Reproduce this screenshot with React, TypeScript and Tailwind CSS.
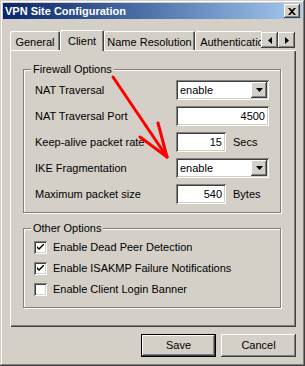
import type { ReactNode } from "react";

// classic 3D bevels
const raised =
  "shadow-[inset_-1px_-1px_0_#404040,inset_1px_1px_0_#ffffff,inset_-2px_-2px_0_#808080,inset_2px_2px_0_#d4d0c8]";
const sunken =
  "shadow-[inset_1px_1px_0_#808080,inset_-1px_-1px_0_#ffffff,inset_2px_2px_0_#404040,inset_-2px_-2px_0_#d4d0c8]";

function Tab({ label, width, selected }: { label: string; width: string; selected?: boolean }) {
  return (
    <div
      className={`${width} ${
        selected ? "h-[22px] -mb-px relative z-10 pt-[3px]" : "h-[19px] pt-[3px]"
      } shrink-0 bg-[#d4d0c8] rounded-t-[2px] shadow-[inset_1px_1px_0_#ffffff,inset_-1px_0_0_#404040,inset_-2px_0_0_#808080] whitespace-nowrap overflow-hidden text-center`}
    >
      {label}
    </div>
  );
}

function ScrollBtn({ dir }: { dir: "left" | "right" }) {
  return (
    <div className={`w-[17px] h-[16px] bg-[#d4d0c8] ${raised} flex items-center justify-center`}>
      <svg width="4" height="7" viewBox="0 0 4 7">
        {dir === "left" ? <path d="M4 0 L0 3.5 L4 7 Z" fill="#000" /> : <path d="M0 0 L4 3.5 L0 7 Z" fill="#000" />}
      </svg>
    </div>
  );
}

function Select({ value }: { value: string }) {
  return (
    <div className={`w-[94px] h-[20px] bg-white ${sunken} flex items-stretch p-[2px]`}>
      <span className="flex-1 pl-[2px] leading-[16px]">{value}</span>
      <div className={`w-[16px] bg-[#d4d0c8] ${raised} flex items-center justify-center`}>
        <svg width="7" height="4" viewBox="0 0 7 4">
          <path d="M0 0 H7 L3.5 4 Z" fill="#000" />
        </svg>
      </div>
    </div>
  );
}

function Input({ value, width }: { value: string; width: string }) {
  return (
    <div className={`${width} h-[20px] bg-white ${sunken} px-[4px] text-right leading-[20px]`}>{value}</div>
  );
}

function Row({ label, children }: { label: string; children: ReactNode }) {
  return (
    <div className="flex items-center h-[20px]">
      <span className="w-[141px] shrink-0">{label}</span>
      {children}
    </div>
  );
}

function Group({ title, className, children }: { title: string; className: string; children: ReactNode }) {
  return (
    <div
      className={`relative w-[258px] border border-[#808080] shadow-[inset_1px_1px_0_#ffffff,1px_1px_0_#ffffff] ${className}`}
    >
      <span className="absolute -top-[8px] left-[7px] px-[2px] bg-[#d4d0c8] leading-[14px]">{title}</span>
      {children}
    </div>
  );
}

function Check({ label, checked }: { label: string; checked?: boolean }) {
  return (
    <div className="flex items-center h-[13px]">
      <div className={`w-[13px] h-[13px] bg-white ${sunken} flex items-center justify-center`}>
        {checked && (
          <svg width="7" height="7" viewBox="0 0 7 7">
            <path d="M0 2 V4 L2 6 L7 1 V-1 L2 4 Z" fill="#000" />
          </svg>
        )}
      </div>
      <span className="ml-[6px] leading-[13px]">{label}</span>
    </div>
  );
}

export default function App() {
  return (
    <div
      className="relative w-[305px] h-[366px] bg-[#d4d0c8] p-[3px] flex flex-col text-[11px] text-black font-['Liberation_Sans',Arial,sans-serif] shadow-[inset_-1px_-1px_0_#404040,inset_1px_1px_0_#d4d0c8,inset_-2px_-2px_0_#808080,inset_2px_2px_0_#ffffff]"
    >
      {/* title bar */}
      <div className="h-[16px] flex items-center bg-gradient-to-r from-[#0a246a] to-[#a6caf0] pl-[2px] pr-[2px]">
        <span className="flex-1 text-white font-bold leading-[16px]">VPN Site Configuration</span>
        <div className={`w-[16px] h-[14px] bg-[#d4d0c8] ${raised} flex items-center justify-center`}>
          <svg width="8" height="7" viewBox="0 0 8 7">
            <path d="M0 0 H2 L4 2 L6 0 H8 L5 3.5 L8 7 H6 L4 5 L2 7 H0 L3 3.5 Z" fill="#000" />
          </svg>
        </div>
      </div>

      {/* tabs */}
      <div className="mt-[10px] ml-[7px] flex items-start h-[21px]">
        <div className="w-[251px] h-[21px] flex items-end overflow-visible">
          <div className="flex items-end w-[251px] overflow-hidden h-[22px] -mb-px">
            <div className="flex items-end h-[21px] self-start">
              <Tab label="General" width="w-[50px]" />
            </div>
            <div className="flex items-end h-[22px]">
              <Tab label="Client" width="w-[44px]" selected />
            </div>
            <div className="flex items-end h-[21px] self-start">
              <Tab label="Name Resolution" width="w-[91px]" />
            </div>
            <div className="flex items-end h-[21px] self-start">
              <Tab label="Authentication" width="w-[80px]" />
            </div>
          </div>
        </div>
        <div className="flex mt-[3px]">
          <ScrollBtn dir="left" />
          <ScrollBtn dir="right" />
        </div>
      </div>

      {/* tab panel */}
      <div className="ml-[7px] w-[286px] h-[277px] pl-[13px] pt-[19px] shadow-[inset_1px_1px_0_#ffffff,inset_-1px_-1px_0_#404040,inset_-2px_-2px_0_#808080]">
        <Group title="Firewall Options" className="pt-[10px] pb-[8px] px-[11px] flex flex-col gap-[6px]">
          <Row label="NAT Traversal">
            <Select value="enable" />
          </Row>
          <Row label="NAT Traversal Port">
            <Input value="4500" width="w-[94px]" />
          </Row>
          <Row label="Keep-alive packet rate">
            <Input value="15" width="w-[50px]" />
            <span className="ml-[7px]">Secs</span>
          </Row>
          <Row label="IKE Fragmentation">
            <Select value="enable" />
          </Row>
          <Row label="Maximum packet size">
            <Input value="540" width="w-[50px]" />
            <span className="ml-[7px]">Bytes</span>
          </Row>
        </Group>

        <Group title="Other Options" className="mt-[15px] pt-[12px] pb-[11px] pl-[10px] flex flex-col gap-[8px]">
          <Check label="Enable Dead Peer Detection" checked />
          <Check label="Enable ISAKMP Failure Notifications" checked />
          <Check label="Enable Client Login Banner" />
        </Group>
      </div>

      {/* buttons */}
      <div className="mt-[7px] flex justify-end gap-[5px] pr-[6px]">
        <div className="w-[75px] h-[23px] border border-black">
          <div className={`w-full h-full ${raised} flex items-center justify-center`}>Save</div>
        </div>
        <div className={`w-[75px] h-[23px] ${raised} flex items-center justify-center`}>Cancel</div>
      </div>

      {/* red annotation arrow */}
      <svg className="absolute left-0 top-0 pointer-events-none" width="305" height="366">
        <g stroke="#ff0000" strokeWidth="3" strokeLinecap="round" fill="none">
          <path d="M113 77 L167 157" />
          <path d="M140 137 L167 157" />
          <path d="M158 123 L167 157" />
        </g>
      </svg>
    </div>
  );
}
